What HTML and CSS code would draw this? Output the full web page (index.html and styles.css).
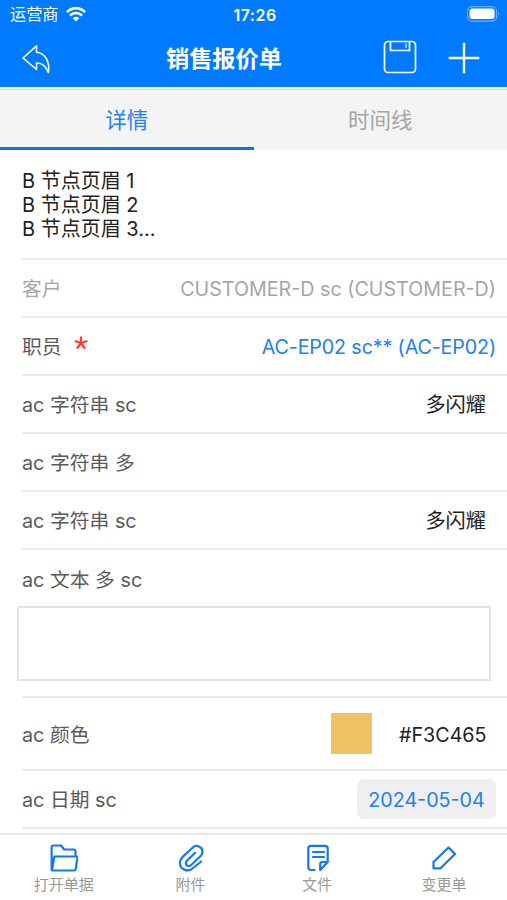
FILE: index.html
```html
<!DOCTYPE html>
<html lang="zh-CN">
<head>
<meta charset="utf-8">
<meta name="viewport" content="width=device-width, initial-scale=1">
<title>销售报价单</title>
<link rel="stylesheet" href="styles.css">
</head>
<body>
<header class="top">
  <div class="status">
    <div class="carrier"><span>运营商</span>
      <svg class="wifi" width="20" height="15" viewBox="0 0 20 15" fill="none" stroke="#fff" stroke-width="2.7"><path d="M.9 5.2C6-.3 14-.3 19.1 5.2M4 8.6c3.4-3.5 8.600-3.500 12 0"/><path d="M10 14.400 6.700 11.200q3.300-2.800 6.600 0z" fill="#fff" stroke="none"/></svg>
    </div>
    <time class="clock">17:26</time>
    <svg class="battery" width="33" height="16" viewBox="0 0 33 16"><rect x=".6" y=".6" width="29" height="14.500" rx="4.500" fill="none" stroke="#66b0ff" stroke-width="1.100"/><rect x="2.600" y="2.600" width="25" height="10.500" rx="2.800" fill="#fff"/><path d="M31 5.500q1.800 2.300 0 4.600z" fill="#66b0ff"/></svg>
  </div>
  <nav class="nav">
    <svg class="back" width="30" height="30" viewBox="0 0 30 30" fill="none" stroke="#fff" stroke-width="1.600" stroke-linejoin="round"><path d="M15.500 1.800 2 14l13.500 11.500v-6.500c5.500-.3 9.300 3.200 11.800 9.500C29 19 25 9 15.500 8.200z"/></svg>
    <h1>销售报价单</h1>
    <svg class="save" width="34" height="34" viewBox="0 0 34 34" fill="none" stroke="#fff" stroke-width="1.700"><rect x="1.500" y="1.500" width="31" height="31" rx="3.500"/><path d="M7.500 1.500v9h19v-9"/><path d="M23 3.500v4.500" stroke-width="1.200"/></svg>
    <svg class="add" width="32" height="32" viewBox="0 0 32 32" stroke="#fff" stroke-width="2.400"><path d="M.7 16h30.600M16 .7v30.600"/></svg>
  </nav>
</header>
<div class="tabs">
  <div class="tab active">详情</div>
  <div class="tab">时间线</div>
</div>
<main class="form">
  <div class="intro">B 节点页眉 1<br>B 节点页眉 2<br>B 节点页眉 3...</div>
  <div class="row muted"><span>客户</span><span class="value">CUSTOMER-D sc (CUSTOMER-D)</span></div>
  <div class="row"><span>职员</span><svg class="star" width="14" height="14" viewBox="0 0 14 14" stroke="#ff3b30" stroke-width="2.200"><path d="M7 7V.4M7 7 .7 5M7 7l6.300-2M7 7l-4 5.500M7 7l4 5.500"/></svg><span class="value link">AC-EP02 sc** (AC-EP02)</span></div>
  <div class="row"><span>ac 字符串 sc</span><span class="value text">多闪耀</span></div>
  <div class="row"><span>ac 字符串 多</span></div>
  <div class="row"><span>ac 字符串 sc</span><span class="value text">多闪耀</span></div>
  <div class="row area"><span>ac 文本 多 sc</span><div class="box"></div></div>
  <div class="row color"><span>ac 颜色</span><i class="swatch"></i><span class="hex">#F3C465</span></div>
  <div class="row date"><span>ac 日期 sc</span><span class="value pill">2024-05-04</span></div>
</main>
<footer class="bar">
  <div class="item"><svg width="28" height="28" viewBox="0 0 28 28"><path d="M1.600 25.500V3q0-1.500 1.500-1.500h8l3 4H23.500q2 0 2 2V12M2 26 4.300 12.500h22.200q1.200 0 1 1.300L25.700 25q-.2 1.500-1.700 1.500H3.200q-1.600 0-1.600-1.500"/></svg><span>打开单据</span></div>
  <div class="item"><svg width="28" height="28" viewBox="0 0 28 28"><path d="M24.200 17.500 15.500 24.500C11 28.500 2.500 25.500 3 18.500c.1-2.500 1.200-4.200 2.900-5.900L15.500 3.800c3.800-3.900 11.300-.6 9.700 5.300-.4 1.500-1.200 2.600-2.400 3.700l-8.600 8.200c-2.200 2.100-5.800.7-5.300-2.300.2-1 .6-1.600 1.400-2.400l7.900-7.500"/></svg><span>附件</span></div>
  <div class="item"><svg width="28" height="28" viewBox="0 0 28 28"><path d="M11.500 26H8q-2.700 0-2.700-2.700V4.500q0-2.600 2.700-2.600h14q2.700 0 2.700 2.600V18L17.200 26V20q0-2 2-2h5M10 8h11M10 13h11"/></svg><span>文件</span></div>
  <div class="item"><svg width="28" height="28" viewBox="0 0 28 28"><path d="M3.500 24.300V18L18.500 3.500 25 10 10.500 24.300z"/></svg><span>变更单</span></div>
</footer>
</body>
</html>
```
FILE: styles.css
```css
* { box-sizing: border-box; }
body {
  margin: 0;
  height: 900px;
  overflow: hidden;
  display: flex;
  flex-direction: column;
  background: #fff;
  color: #5a5a5a;
  font: 19.8px/24px Inter, "Noto Sans CJK SC", sans-serif;
}
svg { display: block; flex: none; }
.top { height: 87px; flex: none; background: #007aff; color: #fff; }
.status {
  height: 30px;
  display: grid;
  grid-template-columns: 1fr auto 1fr;
  align-items: center;
  padding: 0 7px 2px 10px;
}
.carrier { display: flex; align-items: center; gap: 7px; font-size: 16.2px; }
.clock { font-size: 16px; font-weight: 600; letter-spacing: .5px; padding-top: 2px; }
.battery { justify-self: end; }
.nav { height: 57px; display: flex; align-items: center; padding: 0 27px 0 21px; }
.nav h1 {
  margin: 0 0 0 115px;
  font-size: 23.2px;
  font-weight: 700;
  line-height: 30px;
}
.save { margin-left: auto; margin-top: -3px; }
.add { margin-left: 31px; margin-top: -2px; }
.tabs {
  flex: none;
  height: 63px;
  border-top: 2px solid #fff;
  box-shadow: inset 0 1px #d8d8d8;
  background: #f4f4f4;
  display: flex;
}
.tab {
  flex: 1;
  display: flex;
  align-items: center;
  justify-content: center;
  padding-top: 4px;
  font-size: 21.5px;
  color: #a6a6a6;
  border-bottom: 3px solid transparent;
}
.tab.active { color: #1f82f5; border-color: #0876ee; }
.form { height: 683px; flex: none; padding-left: 22px; }
.intro { height: 110px; padding-top: 19px; color: #222; font-size: 20px; border-bottom: 2px solid #ebebeb; }
.row { height: 58px; display: flex; align-items: center; padding-top: 1px; border-bottom: 2px solid #ebebeb; }
.muted { color: #a6a6a6; }
.star { margin: -7px 0 0 12px; }
.value { margin-left: auto; padding-right: 11px; font-size: 19.7px; }
.link { color: #2080f5; letter-spacing: -.13px; }
.text { padding-right: 21px; font-size: 20.2px; color: #222; }
.area { height: 148px; flex-direction: column; align-items: flex-start; padding-top: 18px; }
.box { width: 474px; height: 75px; margin: 14px 0 0 -5px; border: 2px solid #e4e4e4; }
.color { height: 73px; padding-top: 2px; }
.swatch { width: 41px; height: 41px; margin: -2px 0 0 auto; background: #f0c264; }
.hex { width: 88px; margin: 0 20px 0 27px; font-size: 19.7px; color: #222; }
.pill {
  width: 139px;
  height: 40px;
  margin: -1px 11px 0 auto;
  padding: 0;
  border-radius: 7px;
  background: #efeff0;
  color: #2080f5;
  line-height: 42px;
  text-align: center;
}
.bar { height: 67px; flex: none; display: flex; border-top: 2px solid #e6e6e6; }
.item {
  flex: 1;
  display: flex;
  flex-direction: column;
  align-items: center;
  padding: 9px 0 0 1px;
  font-size: 15px;
  line-height: 25px;
  color: #999;
}
.item svg { fill: none; stroke: #1479f0; stroke-width: 2.2; stroke-linejoin: round; stroke-linecap: round; }
```
